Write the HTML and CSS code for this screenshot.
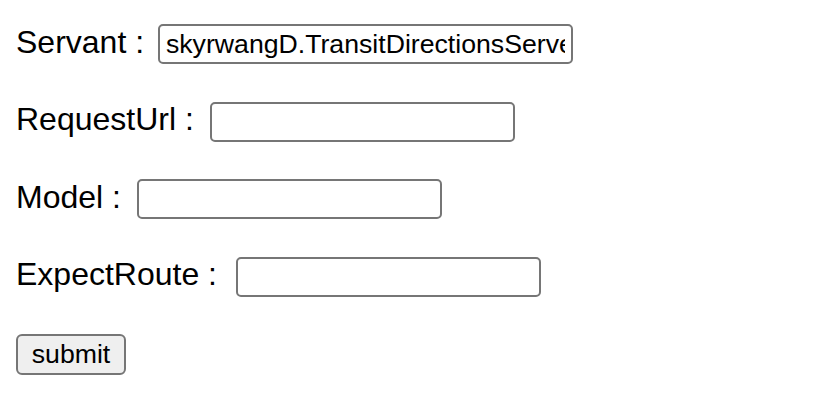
FILE: index.html
```html
<!DOCTYPE html>
<html>
<head>
<meta charset="utf-8">
<link rel="stylesheet" href="styles.css">
</head>
<body>
<form class="form">
  <div class="row"><span class="label">Servant :</span><input class="field field-wide" type="text" value="skyrwangD.TransitDirectionsServer"></div>
  <div class="row"><span class="label">RequestUrl :</span><input class="field" type="text"></div>
  <div class="row"><span class="label">Model :</span><input class="field" type="text"></div>
  <div class="row"><span class="label">ExpectRoute :</span><input class="field field-route" type="text"></div>
  <div class="row"><button class="submit" type="button">submit</button></div>
</form>
</body>
</html>
```
FILE: styles.css
```css
html, body {
  margin: 0;
  padding: 0;
  background: #ffffff;
}
body {
  font-family: "Liberation Sans", Arial, Helvetica, sans-serif;
  color: #000000;
}
.form {
  display: flex;
  flex-direction: column;
  gap: 37.5px;
  padding: 24px 16px 0 16px;
}
.row {
  display: flex;
  align-items: baseline;
}
.label {
  font-size: 32px;
  line-height: 32px;
  white-space: pre;
}
.label::after {
  content: " ";
}
.field {
  box-sizing: border-box;
  width: 305px;
  height: 40px;
  margin: 0 0 0 7px;
  padding: 0 6px;
  border: 2px solid #767676;
  border-radius: 5px;
  font-family: "Liberation Sans", Arial, Helvetica, sans-serif;
  font-size: 26.67px;
  color: #000000;
  background: #ffffff;
  outline: none;
}
.field-wide {
  width: 415px;
  margin-left: 5px;
}
.field-route {
  margin-left: 10px;
}
.submit {
  box-sizing: border-box;
  width: 110px;
  height: 41px;
  padding: 0 12px;
  border: 2px solid #767676;
  border-radius: 6px;
  background: #efefef;
  font-family: "Liberation Sans", Arial, Helvetica, sans-serif;
  font-size: 26.67px;
  color: #000000;
}
```
